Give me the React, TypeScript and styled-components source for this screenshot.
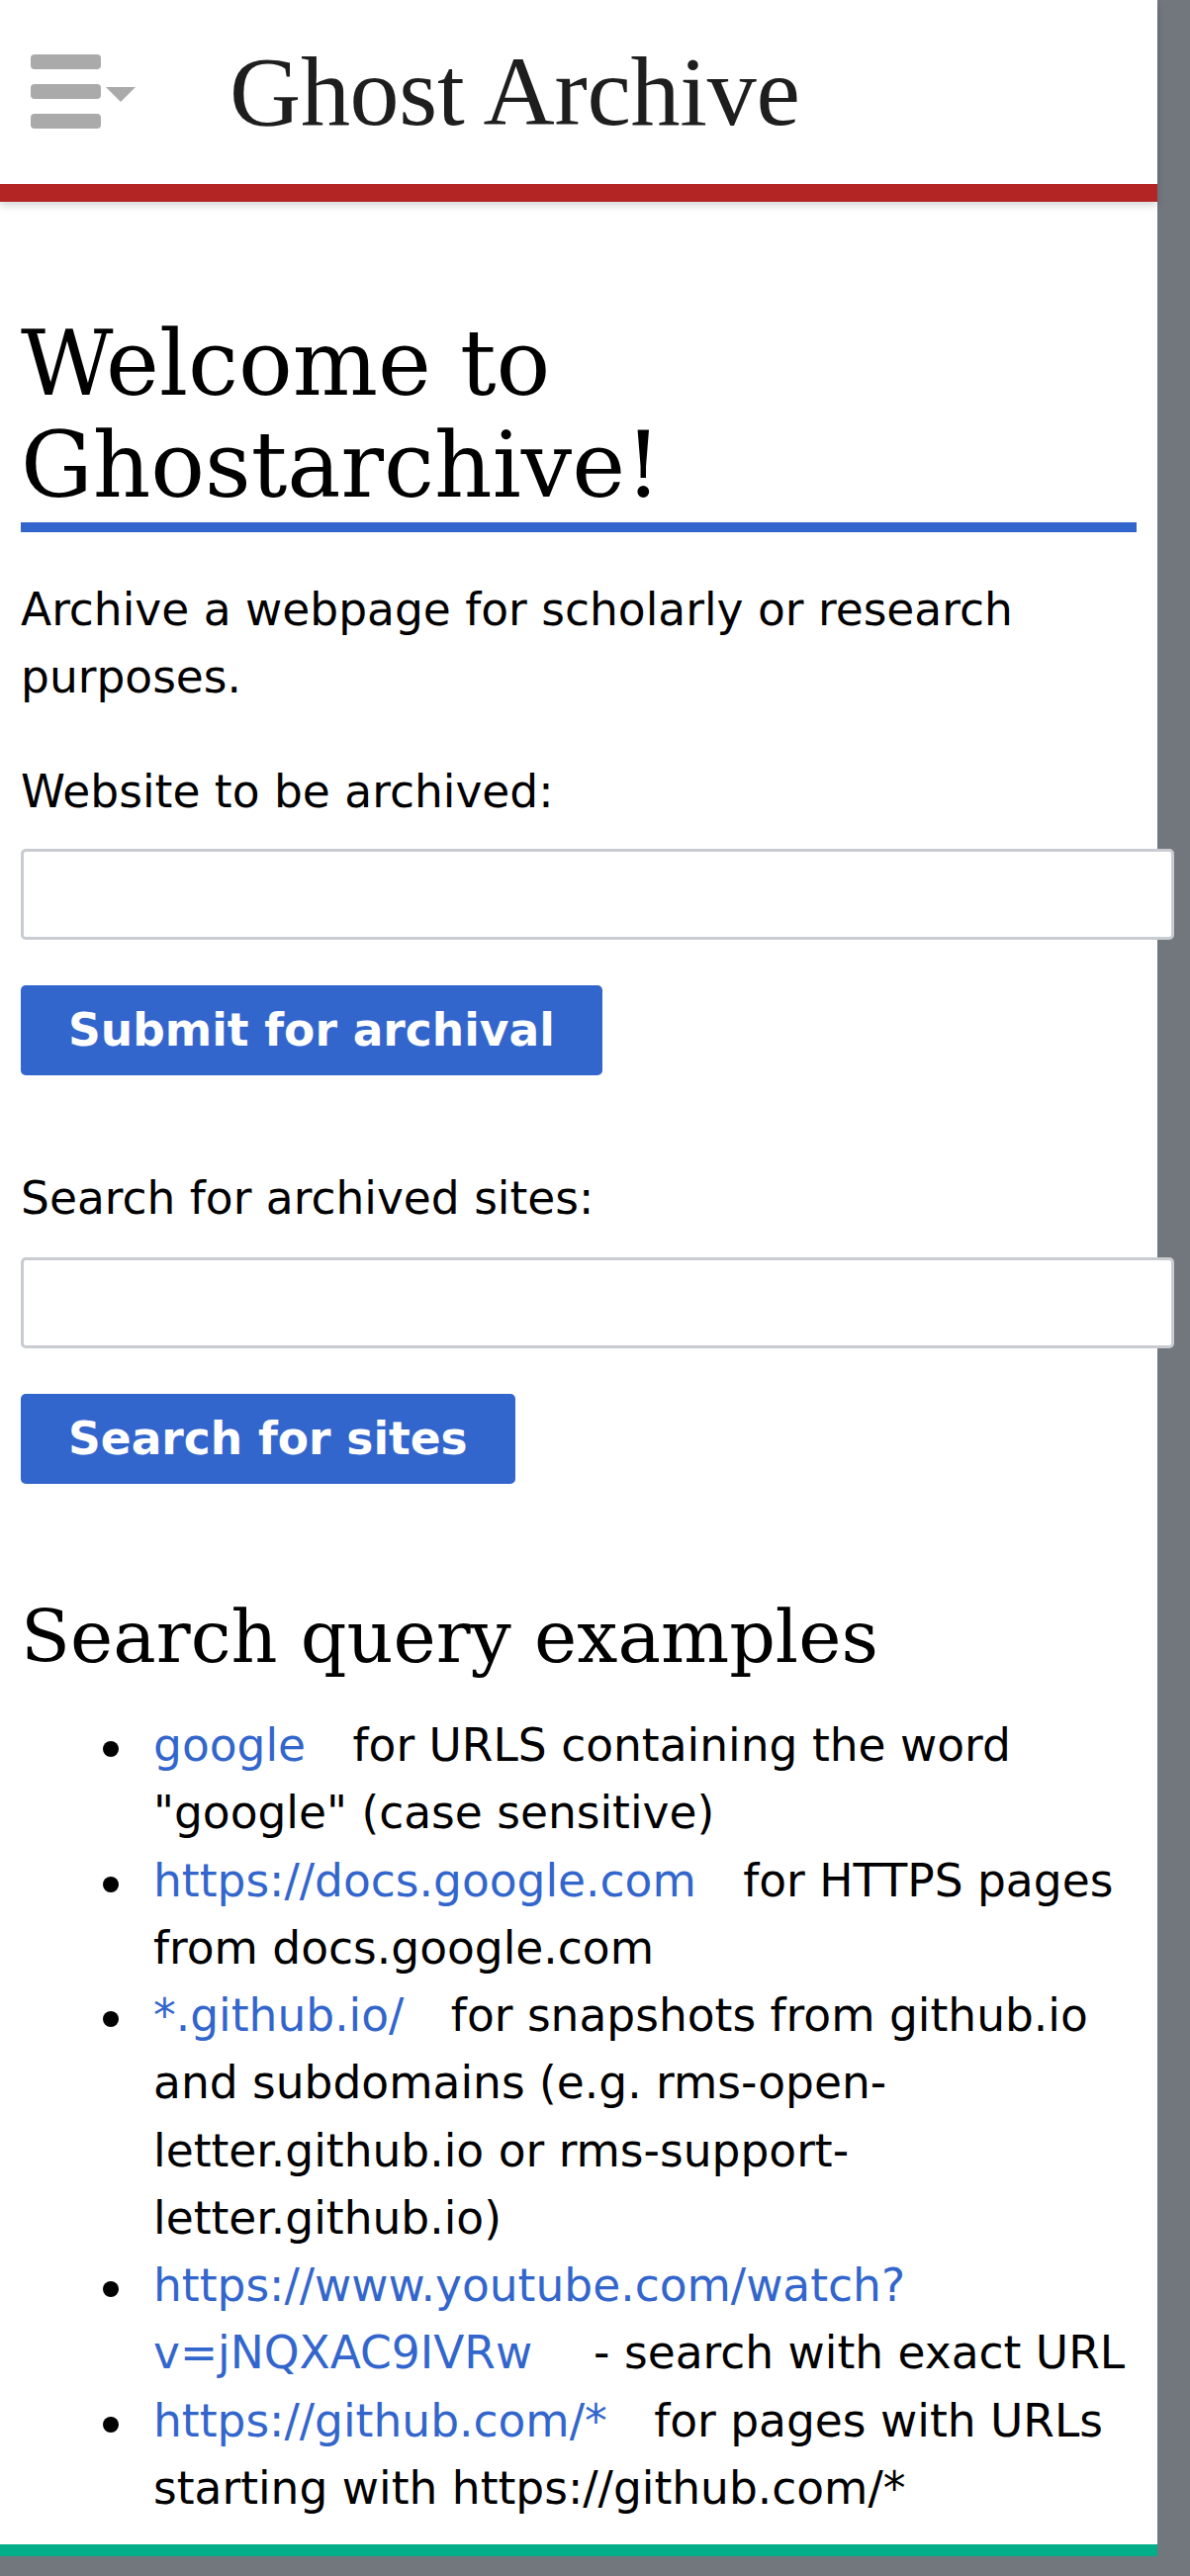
import React from "react";
import styled, { createGlobalStyle } from "styled-components";

const GlobalStyle = createGlobalStyle`
  html, body {
    margin: 0;
    padding: 0;
    background: #72777d;
  }
  body {
    font-family: "DejaVu Sans", "Noto Sans", sans-serif;
    color: #000;
  }
  * { box-sizing: border-box; }
`;

const Page = styled.div`
  width: 1170px;
  background: #fff;
  border-bottom: 12px solid #00af89;
  box-shadow: 0 3px 0 #4e5357;
`;

const Header = styled.header`
  position: relative;
  z-index: 1;
  box-sizing: content-box;
  height: 186px;
  border-bottom: 18px solid #b32424;
  box-shadow: 0 4px 8px rgba(0, 0, 0, 0.16);
  display: flex;
  align-items: center;
  padding-left: 31px;
  background: #fff;
`;

const MenuButton = styled.div`
  display: flex;
  width: 106px;
  height: 75px;
  margin-top: -2px;
`;

const Title = styled.div`
  margin-left: 95px;
  font-family: "Liberation Serif", "DejaVu Serif", serif;
  font-size: 100px;
  line-height: 100px;
  letter-spacing: -0.3px;
  color: #1e1e1e;
`;

const Main = styled.main`
  display: flex;
  flex-direction: column;
  align-items: flex-start;
  padding: 0 21px 22px;
`;

const H1 = styled.h1`
  align-self: stretch;
  margin: 112px 0 0;
  padding-bottom: 6px;
  border-bottom: 10px solid #3366cc;
  font-family: "DejaVu Serif", serif;
  font-weight: normal;
  font-size: 91px;
  line-height: 103px;
`;

const Text = styled.p<{ $top: number }>`
  margin: ${(p) => p.$top}px 0 0;
  font-size: 45.5px;
  line-height: 68.25px;
`;

const Field = styled.input<{ $top: number }>`
  box-sizing: content-box;
  display: block;
  width: 100%;
  height: 86px;
  margin: ${(p) => p.$top}px 0 0;
  padding: 0 16px;
  border: 3px solid #c8ccd1;
  border-radius: 5px;
  background: #fff;
  font-family: inherit;
  font-size: 45px;
  outline: none;
`;

const Button = styled.button`
  margin-top: 46px;
  height: 91px;
  padding: 0 48px;
  border: none;
  border-radius: 5px;
  background: #3366cc;
  color: #fff;
  font-family: "DejaVu Sans", sans-serif;
  font-weight: bold;
  font-size: 45.5px;
  cursor: pointer;
`;

const H2 = styled.h2`
  margin: 112px 0 0;
  font-family: "DejaVu Serif", serif;
  font-weight: normal;
  font-size: 73px;
  line-height: 86px;
`;

const List = styled.ul`
  align-self: stretch;
  margin: 33px 0 0;
  padding: 0;
  list-style: none;
`;

const Item = styled.li`
  display: grid;
  grid-template-columns: 134px 1fr;
  align-items: start;
  font-size: 45.5px;
  line-height: 68.25px;
`;

const Bullet = styled.span`
  display: block;
  width: 16px;
  height: 16px;
  margin: 29px 0 0 83px;
  border-radius: 50%;
  background: #000;
`;

const Desc = styled.span``;

const Link = styled.a`
  color: #3366cc;
  text-decoration: none;
  margin-right: 33px;
`;

const examples: { href: string; text: string }[] = [
  { href: "google", text: " for URLS containing the word \"google\" (case sensitive)" },
  { href: "https://docs.google.com", text: " for HTTPS pages from docs.google.com" },
  {
    href: "*.github.io/",
    text: " for snapshots from github.io and subdomains (e.g. rms-open-letter.github.io or rms-support-letter.github.io)",
  },
  { href: "https://www.youtube.com/watch?v=jNQXAC9IVRw", text: " \u00a0- search with exact URL" },
  { href: "https://github.com/*", text: " for pages with URLs starting with https://github.com/*" },
];

function MenuIcon() {
  return (
    <svg width="106" height="75" viewBox="0 0 106 75" aria-hidden="true">
      <rect x="0" y="0" width="71" height="15" rx="4" fill="#aaa" />
      <rect x="0" y="30" width="71" height="15" rx="4" fill="#aaa" />
      <rect x="0" y="60" width="71" height="15" rx="4" fill="#aaa" />
      <polygon points="76,33 106,33 91,48" fill="#aaa" />
    </svg>
  );
}

export default function App() {
  return (
    <>
      <GlobalStyle />
      <Page>
        <Header>
          <MenuButton>
            <MenuIcon />
          </MenuButton>
          <Title>Ghost Archive</Title>
        </Header>
        <Main>
          <H1>Welcome to Ghostarchive!</H1>
          <Text $top={45}>Archive a webpage for scholarly or research purposes.</Text>
          <Text $top={47}>Website to be archived:</Text>
          <Field $top={23} type="text" />
          <Button>Submit for archival</Button>
          <Text $top={91}>Search for archived sites:</Text>
          <Field $top={25} type="text" />
          <Button>Search for sites</Button>
          <H2>Search query examples</H2>
          <List>
            {examples.map((e) => (
              <Item key={e.href}>
                <Bullet />
                <Desc>
                  <Link href="#">{e.href}</Link>
                  {e.text}
                </Desc>
              </Item>
            ))}
          </List>
        </Main>
      </Page>
    </>
  );
}
